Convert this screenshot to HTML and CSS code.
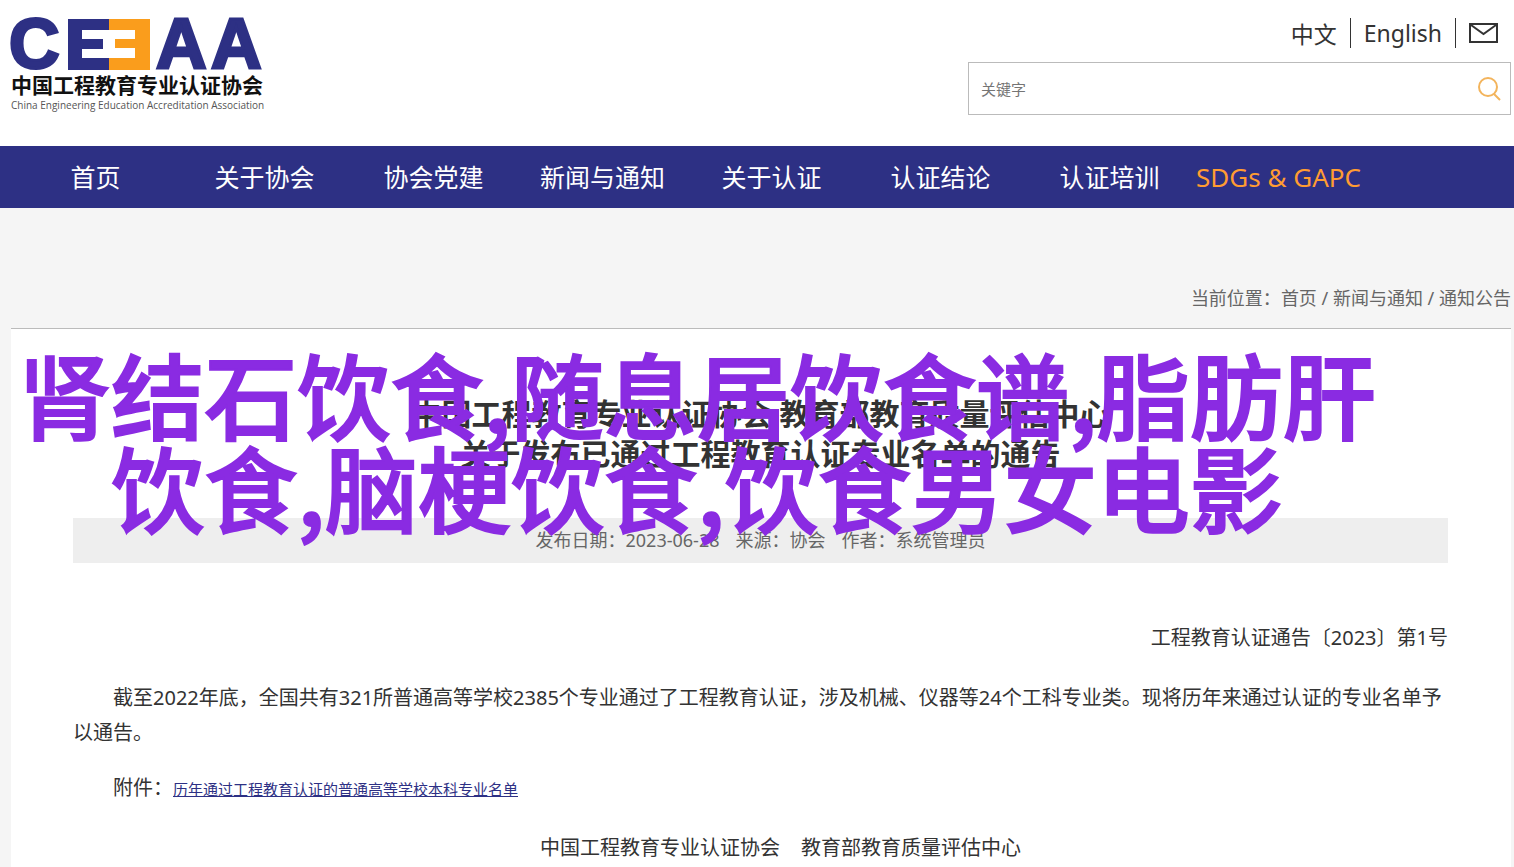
FILE: index.html
```html
<!DOCTYPE html>
<html lang="zh-CN">
<head>
  <meta charset="UTF-8">
  <meta name="viewport" content="width=device-width, initial-scale=1.0">
  <title>中国工程教育专业认证协会</title>
  <link rel="stylesheet" href="styles.css">
</head>
<body>
  <!-- 页头 -->
  <header class="header container">
    <a class="logo" href="#">
      <svg class="logo-mark" width="254" height="54" viewBox="0 0 254 54">
        <text class="logo-letters" x="-2" y="51">C</text>
        <rect x="57" y="2" width="41" height="51" fill="#2d3084"/>
        <rect x="98" y="2" width="41" height="51" fill="#fa9d1c"/>
        <path d="M71 13h53v9h-20v9h20v10H71v-9h21v-10H71z" fill="#fff"/>
        <text class="logo-letters" x="145" y="51">A</text>
        <text class="logo-letters" x="200" y="51">A</text>
      </svg>
      <span class="logo-cn">中国工程教育专业认证协会</span>
      <span class="logo-en">China Engineering Education Accreditation Association</span>
    </a>
    <div class="tools">
      <div class="lang">
        <a href="#">中文</a>
        <a href="#">English</a>
        <a href="#" aria-label="邮箱">
          <svg width="29" height="20" viewBox="0 0 29 20" fill="none" stroke="#333" stroke-width="2">
            <rect x="1" y="1" width="27" height="18"/>
            <path d="M2 2l12.500 9L27 2"/>
          </svg>
        </a>
      </div>
      <form class="search">
        <input type="text" placeholder="关键字" aria-label="关键字">
        <button type="submit" aria-label="搜索">
          <svg width="24" height="24" viewBox="0 0 24 24" fill="none" stroke="#f3b45c" stroke-width="2">
            <circle cx="11" cy="10" r="9"/>
            <path d="M17 17l6 6"/>
          </svg>
        </button>
      </form>
    </div>
  </header>

  <!-- 导航 -->
  <nav class="nav">
    <ul class="container">
      <li><a href="#">首页</a></li>
      <li><a href="#">关于协会</a></li>
      <li><a href="#">协会党建</a></li>
      <li><a href="#">新闻与通知</a></li>
      <li><a href="#">关于认证</a></li>
      <li><a href="#">认证结论</a></li>
      <li><a href="#">认证培训</a></li>
      <li><a class="orange" href="#">SDGs &amp; GAPC</a></li>
    </ul>
  </nav>

  <div class="position container">
    当前位置：<a href="#">首页</a> / <a href="#">新闻与通知</a> / <a href="#">通知公告</a>
  </div>

  <!-- 正文 -->
  <main class="article container">
    <h1>中国工程教育专业认证协会 教育部教育质量评估中心<br>关于发布已通过工程教育认证专业名单的通告</h1>
    <div class="info">
      <span>发布日期：2023-06-28</span>
      <span>来源：协会</span>
      <span>作者：系统管理员</span>
    </div>
    <div class="content">
      <p class="number">工程教育认证通告〔2023〕第1号</p>
      <p>截至2022年底，全国共有321所普通高等学校2385个专业通过了工程教育认证，涉及机械、仪器等24个工科专业类。现将历年来通过认证的专业名单予以通告。</p>
      <p>附件：<a href="#">历年通过工程教育认证的普通高等学校本科专业名单</a></p>
      <p class="sign">中国工程教育专业认证协会 &nbsp;&nbsp; 教育部教育质量评估中心</p>
    </div>
    <div class="banner">肾结石饮食,随息居饮食谱,脂肪肝<br>饮食,脑梗饮食,饮食男女电影</div>
  </main>
</body>
</html>
```
FILE: styles.css
```css
* {
  box-sizing: border-box;
}
body {
  margin: 0;
  min-height: 100vh;
  display: flex;
  flex-direction: column;
  font-family: "Noto Sans", "Noto Sans CJK SC", sans-serif;
  color: #333;
  background: linear-gradient(#fff 146px, #f5f5f5 146px);
}
a {
  color: inherit;
  text-decoration: none;
}
.container {
  margin: 0 3px 0 11px;
}

/* 页头 */
.header {
  display: flex;
  justify-content: space-between;
  height: 146px;
  padding-top: 17px;
}
.logo {
  display: flex;
  flex-direction: column;
  white-space: nowrap;
}
.logo-mark {
  display: block;
  overflow: visible;
}
.logo-letters {
  font-family: "Liberation Sans", Arial, sans-serif;
  font-size: 70px;
  font-weight: bold;
  fill: #2d3084;
  stroke: #2d3084;
  stroke-width: 3px;
}
.logo-cn {
  font-size: 21px;
  font-weight: bold;
  line-height: 28px;
  color: #111;
}
.logo-en {
  font-family: "Open Sans", sans-serif;
  font-size: 10px;
  line-height: 12px;
  color: #555;
}
.tools {
  width: 543px;
}
.lang {
  display: flex;
  justify-content: flex-end;
  align-items: center;
  height: 32px;
  font-size: 23px;
}
.lang a {
  display: flex;
  align-items: center;
  height: 30px;
  padding: 0 13px;
}
.lang a + a {
  border-left: 1px solid #333;
}
.search {
  display: flex;
  height: 53px;
  margin-top: 13px;
  background: #fff;
  border: 1px solid #bbb;
}
.search input {
  flex: 1;
  padding: 0 12px;
  border: none;
  outline: none;
  font-family: inherit;
  font-size: 15px;
  background: none;
}
.search input::placeholder {
  color: #757575;
}
.search button {
  display: flex;
  align-items: center;
  padding: 0 9px;
  border: none;
  background: none;
  cursor: pointer;
}

/* 导航 */
.nav {
  background: #2d3084;
}
.nav ul {
  display: flex;
  padding: 0;
  list-style: none;
}
.nav li {
  width: 169px;
  text-align: center;
  white-space: nowrap;
}
.nav a {
  font-size: 25px;
  line-height: 62px;
  color: #fff;
}
.nav .orange {
  font-size: 26px;
  color: #ff9c32;
}

.position {
  padding-top: 72px;
  font-size: 18px;
  line-height: 36px;
  height: 121px;
  text-align: right;
  color: #666;
  border-bottom: 1px solid #bbb;
}

/* 正文 */
.article {
  position: relative;
  flex: 1;
  padding: 65px 63px 0 62px;
  background: #fff;
}
.article h1 {
  margin: 0 0 44px;
  font-size: 30px;
  line-height: 40px;
  text-align: center;
}
.info {
  display: flex;
  justify-content: center;
  gap: 16px;
  font-size: 18px;
  line-height: 45px;
  color: #666;
  background: #eee;
}
.content {
  padding-top: 57px;
  font-size: 20px;
  line-height: 35px;
}
.content p {
  margin: 0 0 20px;
  text-indent: 2em;
}
.content p.number {
  margin-bottom: 25px;
  text-align: right;
}
.content a {
  font-size: 15px;
  color: #2d3084;
  text-decoration: underline;
}
.content p.sign {
  text-align: center;
  margin: 0;
  padding-top: 3px;
}
.banner {
  position: absolute;
  top: 17px;
  left: -4px;
  width: 92%;
  font-family: "Noto Sans CJK SC", sans-serif;
  font-size: 93px;
  font-weight: 500;
  line-height: 93px;
  text-align: center;
  white-space: nowrap;
  color: #8a2be2;
  -webkit-text-stroke: 2px #8a2be2;
}
```
